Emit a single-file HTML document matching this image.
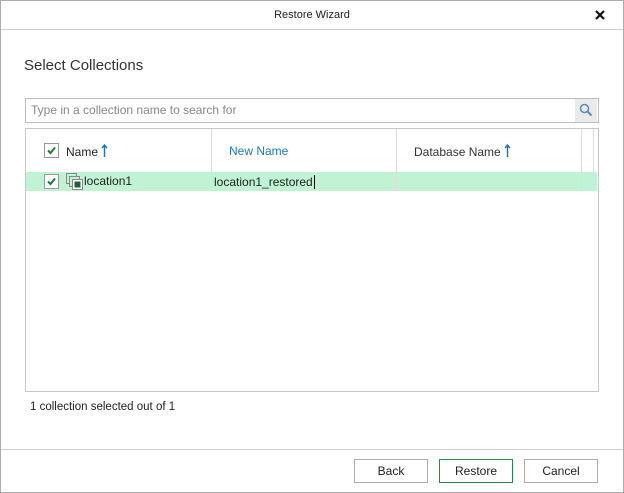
<!DOCTYPE html><html><head><style>
body{margin:0;width:624px;height:493px;background:#fff;font-family:"Liberation Sans",sans-serif;font-size:12px;color:#222;position:relative;overflow:hidden}
.a{position:absolute}
.cb{position:absolute;width:13px;height:13px;border:1px solid #999;background:#fff}
.cb svg{position:absolute;left:1px;top:1px}
.btn{position:absolute;top:459px;width:72px;height:22px;border:1px solid #adadad;text-align:center;line-height:22px;font-size:12px;background:#fff}
.ar{display:inline-block;vertical-align:-1px;margin-left:3px}
</style></head><body>
<div class="a" style="left:0;top:0;width:622px;height:491px;border:1px solid #adadad"></div>
<div class="a" style="left:1px;top:29px;width:622px;height:1px;background:#cfcfcf"></div>
<div class="a" style="left:0;top:9px;width:624px;text-align:center;font-size:11px">Restore Wizard</div>
<svg class="a" style="left:595px;top:10px" width="10" height="10"><path d="M1 1L9 9M9 1L1 9" stroke="#111" stroke-width="2.2"/></svg>
<div class="a" style="left:24px;top:57px;font-size:15px;color:#333">Select Collections</div>
<div class="a" style="left:25px;top:98px;width:572px;height:23px;border:1px solid #bdbdbd"></div>
<div class="a" style="left:31px;top:103px;color:#888;font-size:12px">Type in a collection name to search for</div>
<div class="a" style="left:575px;top:99px;width:22px;height:23px;background:#eaeaea"></div>
<svg class="a" style="left:579px;top:103px" width="14" height="14"><circle cx="5.5" cy="5.5" r="4" fill="none" stroke="#5a8cc0" stroke-width="1.6"/><path d="M8.5 8.5L12.5 12.5" stroke="#5a8cc0" stroke-width="2"/></svg>
<div class="a" style="left:25px;top:128px;width:572px;height:262px;border:1px solid #c8c8c8"></div>
<div class="a" style="left:26px;top:172px;width:571px;height:19px;background:#c0f3d4"></div>
<div class="a" style="left:211px;top:129px;width:1px;height:43px;background:#ddd"></div>
<div class="a" style="left:396px;top:129px;width:1px;height:62px;background:#ddd"></div>
<div class="a" style="left:581px;top:129px;width:1px;height:62px;background:#ddd"></div>
<div class="a" style="left:593px;top:129px;width:1px;height:62px;background:#ddd"></div>
<div class="cb" style="left:44px;top:143px"><svg width="11" height="11"><path d="M2 5.5L4.5 8L9 2.5" fill="none" stroke="#1d7a3a" stroke-width="2"/></svg></div>
<div class="a" style="left:66px;top:144px">Name<svg class="ar" width="7" height="13"><path d="M3.5 1V13M1 4L3.5 1L6 4" fill="none" stroke="#1a73c0" stroke-width="1.4"/></svg></div>
<div class="a" style="left:229px;top:144px;color:#1f78c1">New Name</div>
<div class="a" style="left:414px;top:144px;color:#333">Database Name<svg class="ar" width="7" height="13"><path d="M3.5 1V13M1 4L3.5 1L6 4" fill="none" stroke="#1a73c0" stroke-width="1.4"/></svg></div>
<div class="cb" style="left:44px;top:174px"><svg width="11" height="11"><path d="M2 5.5L4.5 8L9 2.5" fill="none" stroke="#1d7a3a" stroke-width="2"/></svg></div>
<svg class="a" style="left:66px;top:173px" width="18" height="18"><rect x="0.5" y="0.5" width="10" height="10" fill="none" stroke="#888"/><rect x="3.5" y="3.5" width="10" height="10" fill="#c0f3d4" stroke="#888"/><rect x="6.5" y="6.5" width="10" height="10" fill="#fff" stroke="#888"/><rect x="8.5" y="8.5" width="6" height="6" fill="#1f5f3f"/></svg>
<div class="a" style="left:84px;top:174px">location1</div>
<div class="a" style="left:214px;top:175px">location1_restored<span style="border-left:1px solid #000;margin-left:1px"></span></div>
<div class="a" style="left:30px;top:401px;font-size:11.5px">1 collection selected out of 1</div>
<div class="a" style="left:1px;top:449px;width:622px;height:1px;background:#cfcfcf"></div>
<div class="btn" style="left:354px">Back</div>
<div class="btn" style="left:439px;border-color:#2a8a4a">Restore</div>
<div class="btn" style="left:524px">Cancel</div>
</body></html>
